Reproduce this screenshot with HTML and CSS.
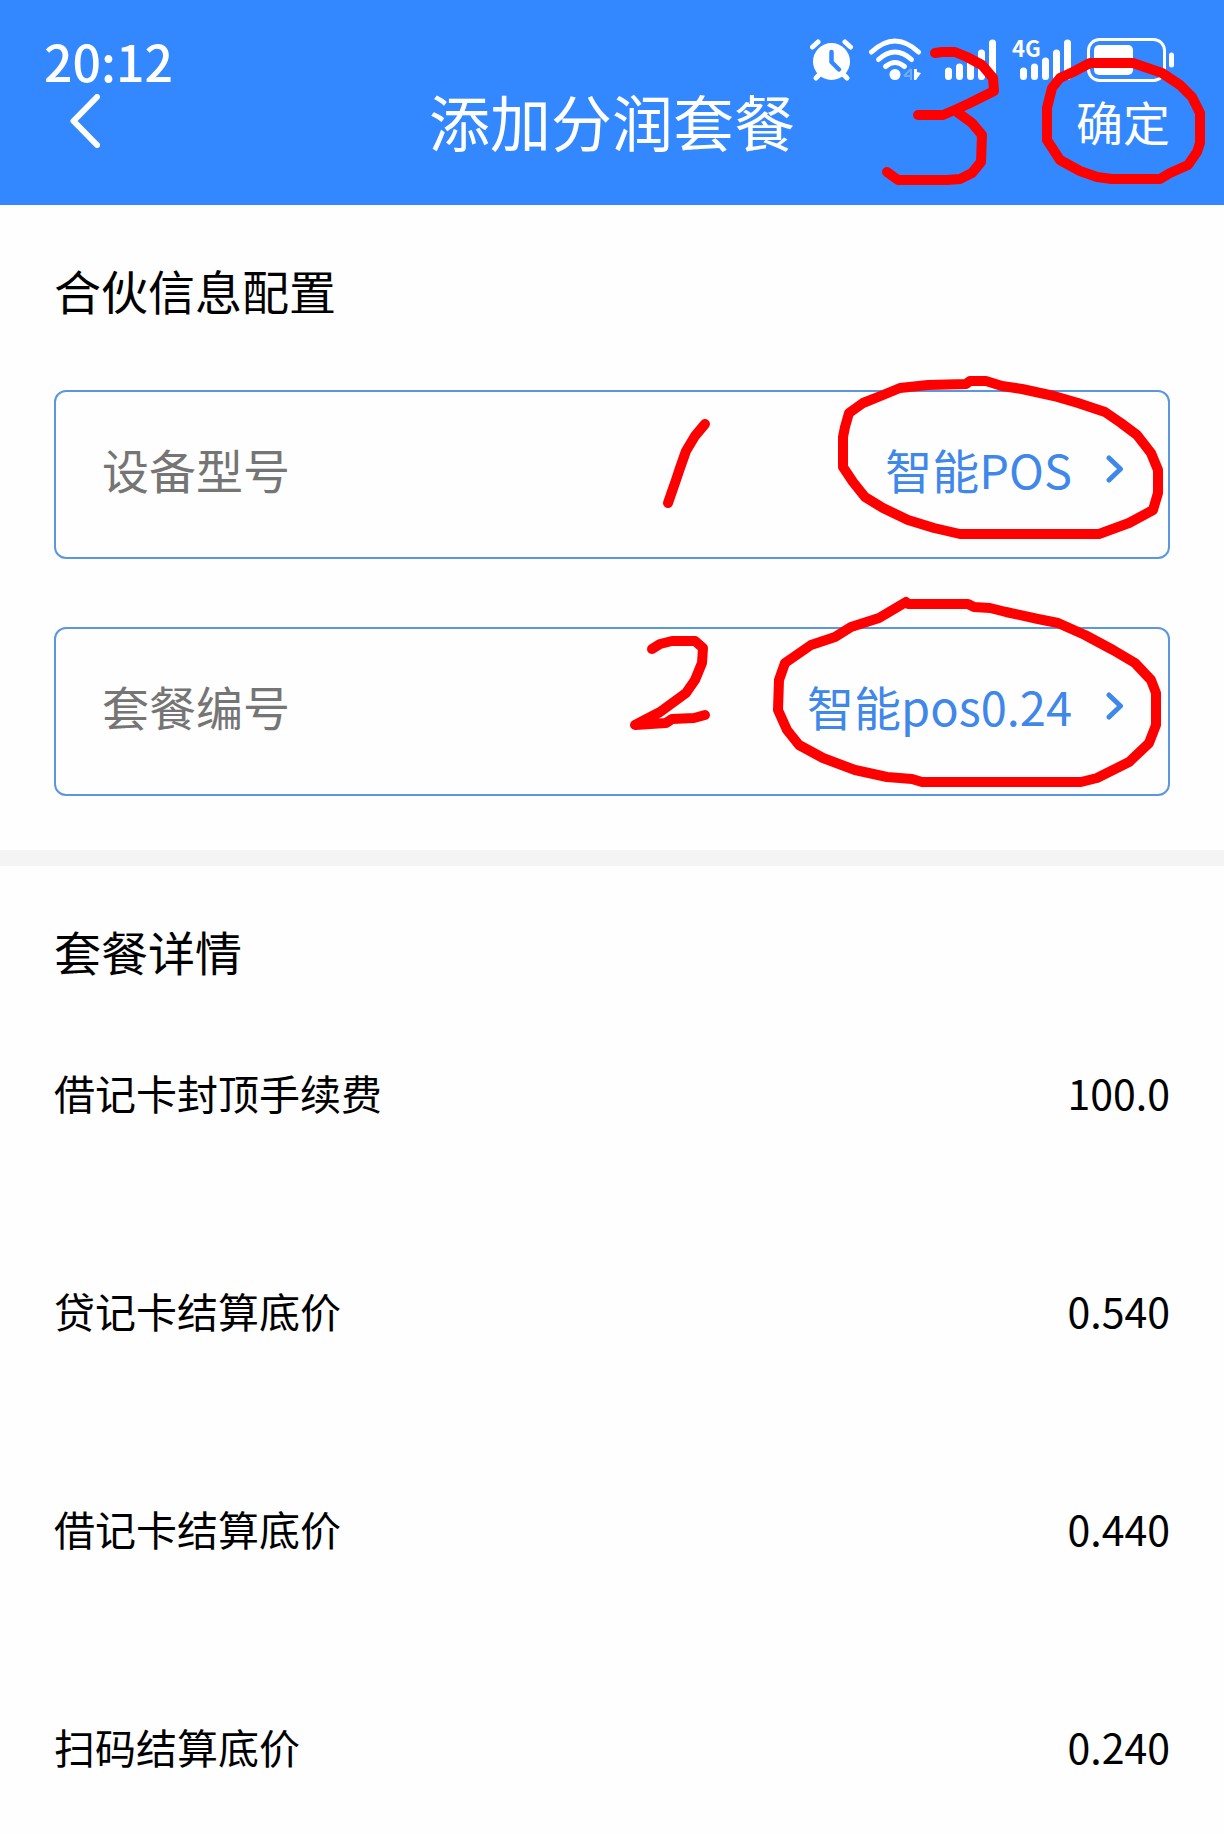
FILE: index.html
```html
<!DOCTYPE html>
<html lang="zh-CN">
<head>
<meta charset="utf-8">
<meta name="viewport" content="width=device-width, initial-scale=1">
<title>添加分润套餐</title>
<link rel="stylesheet" href="styles.css">
</head>
<body>
<div class="page">
  <header class="header">
    <div class="status">
      <time class="clock">20:12</time>
      <div class="status-icons">
        <svg width="43" height="44" viewBox="0 0 43 44" aria-hidden="true">
          <g fill="none" stroke="#fff" stroke-linecap="round">
            <path d="M2.5 9 8 4M40.500 9 35 4" stroke-width="5"/>
            <path d="M9 37 6 40M34 37 37 40" stroke-width="5"/>
          </g>
          <circle cx="21.500" cy="23.500" r="18.500" fill="#fff"/>
          <path d="M21.500 14V24L29 31.500" fill="none" stroke="#3388ff" stroke-width="4.500" stroke-linecap="round" stroke-linejoin="round"/>
        </svg>
        <svg width="60" height="44" viewBox="0 0 60 44" aria-hidden="true">
          <g fill="none" stroke="#fff" stroke-width="5" stroke-linecap="round">
            <path d="M2.500 14Q26 -8 49.500 14"/>
            <path d="M9.500 21.500Q26 6.500 42.500 21.500"/>
            <path d="M16.500 28.500Q26 20.500 35.500 28.500"/>
          </g>
          <circle cx="26" cy="36.500" r="5.500" fill="#fff"/>
          <path d="M42 31V42M35 38 42 31M35 38H42" fill="none" stroke="#6fabff" stroke-width="2"/>
          <path d="M45 31H48V34L52 35 47 42H45Z" fill="#fff"/>
        </svg>
        <svg width="51" height="44" viewBox="0 0 51 44" aria-hidden="true">
          <path d="M3.500 33V38.500M14.500 29V38.500M25.500 23V38.500M36.500 15V38.500M47.500 5V38.500" stroke="#fff" stroke-width="7" stroke-linecap="round"/>
        </svg>
        <svg class="cell" width="59" height="44" viewBox="0 0 59 44" role="img" aria-label="4G">
          <path d="M11.500 33V38.500M22.500 29V38.500M33.500 23V38.500M44.500 15V38.500M55.500 5V38.500" stroke="#fff" stroke-width="7" stroke-linecap="round"/>
          <text class="network" x="0" y="19">4G</text>
        </svg>
        <svg width="87" height="44" viewBox="0 0 87 44" aria-hidden="true">
          <rect x="1.500" y="1.500" width="76" height="41" rx="11" fill="none" stroke="#fff" stroke-width="3"/>
          <rect x="7" y="7" width="39" height="30" rx="5" fill="#fff"/>
          <path d="M84.500 17V27" stroke="#fff" stroke-width="5" stroke-linecap="round"/>
        </svg>
      </div>
    </div>
    <div class="nav">
      <button class="nav-button back" type="button" aria-label="返回">
        <svg width="30" height="54" viewBox="0 0 30 54" aria-hidden="true">
          <path d="M27 3 3.500 27 27 51" fill="none" stroke="#fff" stroke-width="6" stroke-linecap="round" stroke-linejoin="round"/>
        </svg>
      </button>
      <h1 class="title">添加分润套餐</h1>
      <button class="nav-button confirm" type="button">确定</button>
    </div>
  </header>

  <main>
    <section class="section">
      <h2 class="heading">合伙信息配置</h2>
      <div class="fields">
        <div class="field">
          <label class="field-label" for="model">设备型号</label>
          <select class="field-value" id="model"><option>智能POS</option></select>
          <svg width="18" height="28" viewBox="0 0 18 28" aria-hidden="true">
            <path d="M3 3 14.500 14 3 25" fill="none" stroke="#3f87e8" stroke-width="5" stroke-linecap="round" stroke-linejoin="round"/>
          </svg>
        </div>
        <div class="field">
          <label class="field-label" for="plan">套餐编号</label>
          <select class="field-value" id="plan"><option>智能pos0.24</option></select>
          <svg width="18" height="28" viewBox="0 0 18 28" aria-hidden="true">
            <path d="M3 3 14.500 14 3 25" fill="none" stroke="#3f87e8" stroke-width="5" stroke-linecap="round" stroke-linejoin="round"/>
          </svg>
        </div>
      </div>
    </section>

    <section class="section details">
      <h2 class="heading">套餐详情</h2>
      <dl class="rates">
        <div class="rate"><dt>借记卡封顶手续费</dt><dd>100.0</dd></div>
        <div class="rate"><dt>贷记卡结算底价</dt><dd>0.540</dd></div>
        <div class="rate"><dt>借记卡结算底价</dt><dd>0.440</dd></div>
        <div class="rate"><dt>扫码结算底价</dt><dd>0.240</dd></div>
      </dl>
    </section>
  </main>

  <!-- Red pen marks showing the order of the three steps -->
  <svg class="marks" width="600" height="800" viewBox="624 0 600 800" aria-hidden="true">
    <path d="M705 424 695 436 686 451 680 468 676 480 668 503"/>
    <path d="M843 437V467L853 482 865 497 883 508 908 520 934 528 960 534H1099L1129 523 1153 510 1158 493V470L1151 453 1137 435 1121 423 1105 412 1078 403 1054 396 1022 389 1002 386 986 381H970L966 384 928 385 900 388 883 395 863 403 849 413 845 427Z"/>
    <path d="M652 649 660 644 672 641H695L703 648 702 663 695 680 686 693 660 712 635 725 666 723 672 719 694 718 705 715"/>
    <path d="M779 680 778 710 787 730 799 745 823 758 855 770 887 777 912 779 922 782H1081L1097 778 1129 762 1149 743 1156 725V693L1151 680 1135 663 1113 650 1085 635 1058 623 1038 619 1006 612 990 608 974 607 968 604H908L906 602 879 618 851 627 835 637 811 645 785 663Z"/>
    <path d="M935 53 942 52H955L967 57 982 65 993 78 994 91 982 97 970 103 957 109 943 115H918M957 112 972 123 982 135 981 162 972 173 960 179 947 180H898L887 172"/>
    <path d="M1047 108V140L1060 160 1080 171 1097 177 1112 179H1160L1170 173 1188 165 1197 152 1200 143V113L1192 97 1180 85 1162 73 1133 63H1090L1073 72 1060 78 1052 88Z"/>
  </svg>
</div>
</body>
</html>
```
FILE: styles.css
```css
* {
  box-sizing: border-box;
}

body {
  margin: 0;
  background: #fefefe;
  color: #000;
  font-family: "Noto Sans CJK SC", sans-serif;
  font-size: 41px;
  line-height: 62px;
}

h1, h2, dl, dd {
  margin: 0;
  font-weight: 400;
}

svg {
  display: block;
  flex: none;
}

.page {
  position: relative;
}

.header {
  padding-bottom: 49px;
  background: #3388ff;
  color: #fff;
}

.status {
  display: flex;
  justify-content: space-between;
  align-items: flex-end;
  height: 86px;
  padding: 0 50px 4px 44px;
}

.clock {
  font-size: 50px;
  font-weight: 500;
  line-height: 44px;
}

.status-icons {
  display: flex;
  gap: 16px;
}

.cell {
  overflow: visible;
}

.network {
  fill: #fff;
  font-size: 22px;
  font-weight: 700;
}

.nav {
  display: grid;
  grid-template-columns: 1fr auto 1fr;
  align-items: center;
  height: 70px;
  padding: 0 54px;
}

.title {
  font-size: 61px;
  line-height: 70px;
}

.nav-button {
  padding: 0;
  border: 0;
  background: none;
  color: inherit;
  font: inherit;
}

.back {
  justify-self: start;
  padding: 0 16px;
}

.confirm {
  justify-self: end;
  font-size: 47px;
}

.section {
  padding: 50px 54px 54px;
}

.heading {
  font-size: 47px;
  line-height: 70px;
}

.fields {
  display: grid;
  gap: 68px;
  margin-top: 65px;
}

.field {
  display: flex;
  align-items: center;
  height: 169px;
  padding: 0 44px 12px 46px;
  border: 2px solid #5b97e0;
  border-radius: 12px;
  font-size: 47px;
}

.field-label {
  color: #757575;
}

.field-value {
  flex: 1;
  min-width: 0;
  margin-right: 34px;
  padding: 0;
  border: 0;
  appearance: none;
  background: none;
  color: #3f87e8;
  font: inherit;
  line-height: 70px;
  text-align-last: right;
}

.details {
  border-top: 16px solid #f4f4f4;
}

.rates {
  display: grid;
  gap: 156px;
  margin-top: 75px;
}

.rate {
  display: flex;
  justify-content: space-between;
}

.marks {
  position: absolute;
  top: 0;
  right: 0;
  fill: none;
  stroke: #f00;
  stroke-width: 10px;
  stroke-linecap: round;
  stroke-linejoin: round;
  pointer-events: none;
}
```
